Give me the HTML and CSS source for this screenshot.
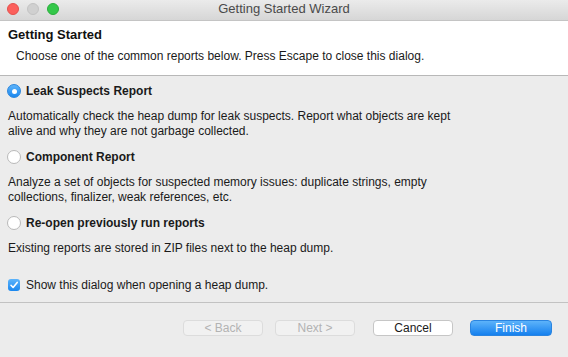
FILE: index.html
```html
<!DOCTYPE html>
<html>
<head>
<meta charset="utf-8">
<link rel="stylesheet" href="styles.css">
</head>
<body>
<div class="window">
  <div class="titlebar">
    <div class="lights">
      <span class="light red"></span>
      <span class="light grey"></span>
      <span class="light green"></span>
    </div>
    <div class="title">Getting Started Wizard</div>
  </div>
  <div class="header">
    <div class="h-title">Getting Started</div>
    <div class="h-sub">Choose one of the common reports below. Press Escape to close this dialog.</div>
  </div>
  <div class="content">
    <div class="option">
      <div class="radio-row"><span class="radio checked"></span><span class="radio-label">Leak Suspects Report</span></div>
      <p class="desc">Automatically check the heap dump for leak suspects. Report what objects are kept<br>alive and why they are not garbage collected.</p>
    </div>
    <div class="option">
      <div class="radio-row"><span class="radio"></span><span class="radio-label">Component Report</span></div>
      <p class="desc">Analyze a set of objects for suspected memory issues: duplicate strings, empty<br>collections, finalizer, weak references, etc.</p>
    </div>
    <div class="option">
      <div class="radio-row"><span class="radio"></span><span class="radio-label">Re-open previously run reports</span></div>
      <p class="desc">Existing reports are stored in ZIP files next to the heap dump.</p>
    </div>
    <div class="check-row">
      <span class="checkbox"><svg width="12" height="12" viewBox="0 0 12 12"><path d="M3 6.3 L5.1 8.5 L9.2 3.4" fill="none" stroke="#fff" stroke-width="1.6" stroke-linecap="round" stroke-linejoin="round"/></svg></span>
      <span class="check-label">Show this dialog when opening a heap dump.</span>
    </div>
  </div>
  <div class="footer">
    <button class="btn disabled">&lt; Back</button>
    <button class="btn disabled next">Next &gt;</button>
    <button class="btn cancel">Cancel</button>
    <button class="btn primary">Finish</button>
  </div>
</div>
</body>
</html>
```
FILE: styles.css
```css
html, body {
  margin: 0;
  padding: 0;
}
body {
  background: #ececec;
  font-family: "Liberation Sans", Arial, sans-serif;
  font-size: 12px;
  color: #1a1a1a;
  width: 568px;
  height: 357px;
  overflow: hidden;
}
.window {
  display: flex;
  flex-direction: column;
  height: 357px;
}
.titlebar {
  height: 21px;
  background: linear-gradient(#ebebeb, #d6d6d6);
  display: flex;
  align-items: center;
  justify-content: center;
  position: relative;
  border-bottom: 1px solid #c4c4c4;
  box-sizing: border-box;
}
.lights {
  position: absolute;
  left: 7px;
  top: 3px;
  display: flex;
  gap: 8px;
}
.light {
  width: 12px;
  height: 12px;
  border-radius: 50%;
  box-sizing: border-box;
}
.light.red { background: #fc605c; border: 1px solid #e4514d; }
.light.grey { background: #d0d0d0; border: 1px solid #c3c3c3; }
.light.green { background: #34c84a; border: 1px solid #2aae3c; }
.title {
  font-size: 13px;
  color: #4a4a4a;
  margin-top: -3px;
}
.header {
  background: #fff;
  height: 55px;
  box-sizing: border-box;
  padding: 6px 0 0 8px;
  border-bottom: 1px solid #b8b8b8;
}
.h-title {
  font-weight: bold;
  font-size: 13px;
  line-height: 16px;
  color: #111;
}
.h-sub {
  margin: 6px 0 0 8px;
  line-height: 15px;
  color: #1a1a1a;
}
.content {
  padding: 7px 0 0 7px;
  flex: 1;
  border-bottom: 1px solid #c2c2c2;
  box-sizing: border-box;
}
.option {
  margin-bottom: 10px;
}
.radio-row {
  display: flex;
  align-items: center;
  height: 16px;
  margin-bottom: 10px;
}
.radio {
  width: 14px;
  height: 14px;
  border-radius: 50%;
  background: #fff;
  border: 1px solid #b9b9b9;
  box-sizing: border-box;
  margin-right: 5px;
  display: flex;
  align-items: center;
  justify-content: center;
}
.radio.checked {
  background: linear-gradient(#5db4fb, #1a87ef);
  border-color: #2b86dc;
}
.radio.checked::after {
  content: "";
  width: 5px;
  height: 5px;
  border-radius: 50%;
  background: #fff;
}
.radio-label {
  font-weight: bold;
}
.desc {
  margin: 0 0 0 1px;
  line-height: 15px;
}
.check-row {
  display: flex;
  align-items: center;
  height: 16px;
  margin-top: 21px;
}
.checkbox {
  width: 12px;
  height: 12px;
  border-radius: 3px;
  background: linear-gradient(#5db4fb, #1a87ef);
  margin: 0 6px 0 1px;
  display: flex;
}
.footer {
  height: 54px;
  display: flex;
  align-items: flex-start;
  padding: 17px 0 0 183px;
  box-sizing: border-box;
}
.btn {
  width: 80px;
  height: 16px;
  border-radius: 4px;
  font-family: "Liberation Sans", Arial, sans-serif;
  font-size: 12px;
  padding: 0;
  line-height: 14px;
  box-sizing: border-box;
  border: 1px solid #c6c6c6;
  background: #fff;
  color: #1a1a1a;
}
.btn.disabled {
  background: #f1f1f1;
  color: #b3b3b3;
  border-color: #dcdcdc;
}
.btn.next { margin-left: 12px; }
.btn.cancel { margin-left: 18px; }
.btn.primary {
  margin-left: 17px;
  width: 82px;
  background: linear-gradient(#5db3fa, #1580ee);
  border-color: #2a84e0;
  color: #fff;
}
```
